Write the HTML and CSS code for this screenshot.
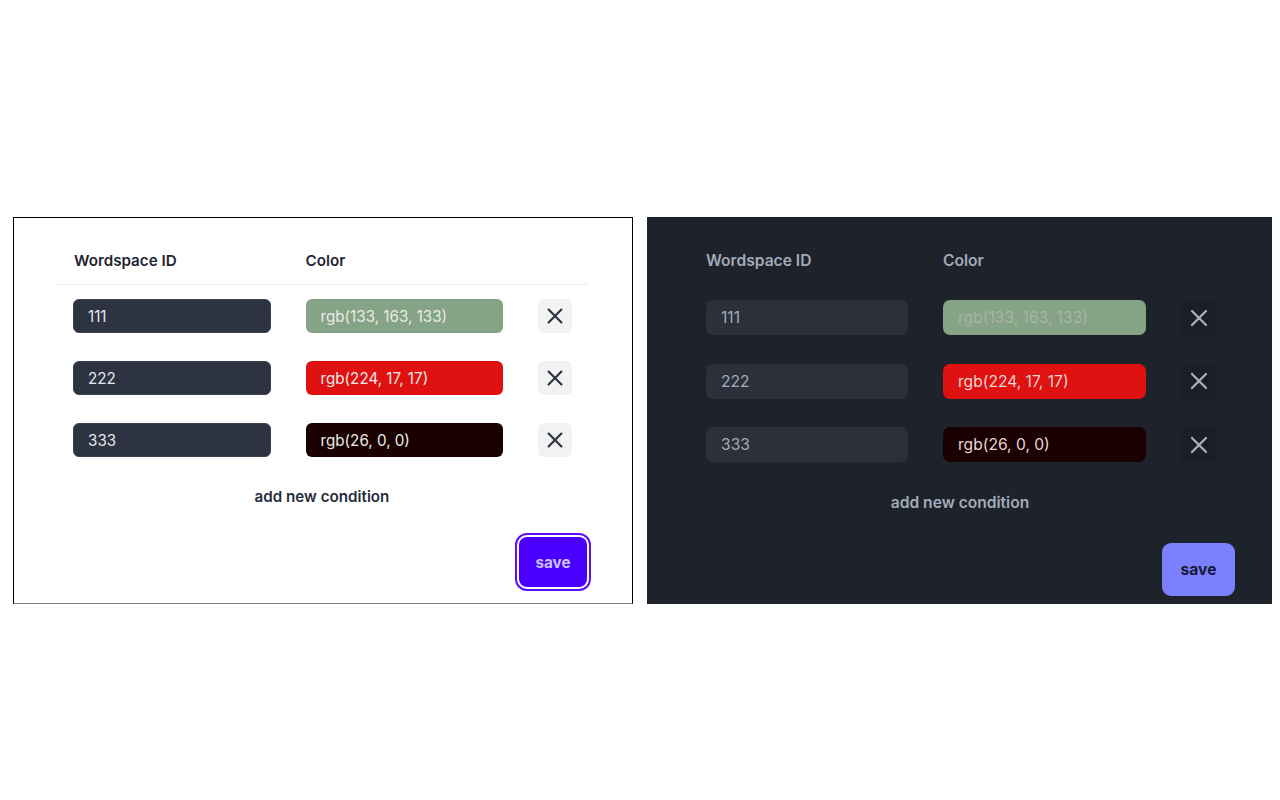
FILE: index.html
```html
<!DOCTYPE html>
<html lang="en">
<head>
<meta charset="utf-8">
<title>Workspace colors</title>
<link rel="stylesheet" href="styles.css">
</head>
<body>
<div class="stage">
  <section class="panel light">
    <div class="table">
      <div class="head">
        <div class="th">Wordspace ID</div>
        <div class="th">Color</div>
        <div class="th"></div>
      </div>
      <div class="rows">
        <div class="row">
          <div class="cell"><div class="field id">111</div></div>
          <div class="cell"><div class="field color" style="background: rgb(133, 163, 133)">rgb(133, 163, 133)</div></div>
          <div class="cell"><button class="remove"><svg viewBox="0 0 24 24"><path d="M5 5L19 19M19 5L5 19"/></svg></button></div>
        </div>
        <div class="row">
          <div class="cell"><div class="field id">222</div></div>
          <div class="cell"><div class="field color bright" style="background: rgb(224, 17, 17)">rgb(224, 17, 17)</div></div>
          <div class="cell"><button class="remove"><svg viewBox="0 0 24 24"><path d="M5 5L19 19M19 5L5 19"/></svg></button></div>
        </div>
        <div class="row">
          <div class="cell"><div class="field id">333</div></div>
          <div class="cell"><div class="field color bright" style="background: rgb(26, 0, 0)">rgb(26, 0, 0)</div></div>
          <div class="cell"><button class="remove"><svg viewBox="0 0 24 24"><path d="M5 5L19 19M19 5L5 19"/></svg></button></div>
        </div>
      </div>
      <div class="add">add new condition</div>
      <div class="actions"><button class="save">save</button></div>
    </div>
  </section>

  <section class="panel dark">
    <div class="table">
      <div class="head">
        <div class="th">Wordspace ID</div>
        <div class="th">Color</div>
        <div class="th"></div>
      </div>
      <div class="rows">
        <div class="row">
          <div class="cell"><div class="field id">111</div></div>
          <div class="cell"><div class="field color" style="background: rgb(133, 163, 133)">rgb(133, 163, 133)</div></div>
          <div class="cell"><button class="remove"><svg viewBox="0 0 24 24"><path d="M5 5L19 19M19 5L5 19"/></svg></button></div>
        </div>
        <div class="row">
          <div class="cell"><div class="field id">222</div></div>
          <div class="cell"><div class="field color bright" style="background: rgb(224, 17, 17)">rgb(224, 17, 17)</div></div>
          <div class="cell"><button class="remove"><svg viewBox="0 0 24 24"><path d="M5 5L19 19M19 5L5 19"/></svg></button></div>
        </div>
        <div class="row">
          <div class="cell"><div class="field id">333</div></div>
          <div class="cell"><div class="field color bright" style="background: rgb(26, 0, 0)">rgb(26, 0, 0)</div></div>
          <div class="cell"><button class="remove"><svg viewBox="0 0 24 24"><path d="M5 5L19 19M19 5L5 19"/></svg></button></div>
        </div>
      </div>
      <div class="add">add new condition</div>
      <div class="actions"><button class="save">save</button></div>
    </div>
  </section>
</div>
</body>
</html>
```

FILE: styles.css
```css
* { box-sizing: border-box; }

html, body {
  margin: 0;
  padding: 0;
  background: #ffffff;
}

body {
  font-family: Inter, "Liberation Sans", Arial, sans-serif;
  width: 1280px;
  height: 800px;
  overflow: hidden;
}

.stage {
  display: flex;
  align-items: flex-start;
  gap: 14px;
  padding: 217px 0 0 13px;
}

.panel {
  height: 387px;
}

.table {
  display: flex;
  flex-direction: column;
}

.head,
.row {
  display: grid;
}

.th {
  font-weight: 600;
  line-height: 20px;
}

.rows {
  display: flex;
  flex-direction: column;
}

.cell {
  display: flex;
  align-items: center;
}

.field {
  flex: 1;
  display: flex;
  align-items: center;
  padding-left: 15px;
  border-radius: 6px;
  white-space: nowrap;
}

.remove {
  display: flex;
  align-items: center;
  justify-content: center;
  padding: 0;
  border: 0;
  border-radius: 6px;
  cursor: pointer;
}

.remove svg {
  fill: none;
  stroke-width: 2.3;
  stroke-linecap: round;
}

.add {
  text-align: center;
  font-weight: 600;
  line-height: 20px;
  margin-top: 30px;
}

.actions {
  display: flex;
  justify-content: flex-end;
}

.save {
  font-family: inherit;
  font-weight: 700;
  border: 0;
  cursor: pointer;
}

/* ---------- light ---------- */
.light {
  width: 620px;
  border: 1px solid #000000;
  border-bottom-color: #7f7f7f;
  padding: 0 44px 0 42px;
  color: #1e2533;
}

.light .head,
.light .row {
  grid-template-columns: 232px 232px 69px;
}

.light .th {
  font-size: 15.2px;
  padding: 33px 17.5px 13px;
}

.light .th:first-child { padding-left: 18px; }

.light .head {
  border-bottom: 1px solid #efefef;
}

.light .rows {
  gap: 28px;
  margin-top: 14px;
}

.light .cell {
  padding: 0 17.5px;
  height: 34px;
}

.light .cell:first-child { padding-left: 17px; }

.light .field {
  height: 34px;
  font-size: 15.2px;
  color: #e4e8ee;
}

.light .field.id {
  background: #2d3340;
  border: 1px solid #3a4150;
  padding-left: 14px;
}

.light .field.color { color: #e9ece9; }

.light .remove {
  width: 34px;
  height: 34px;
  background: #f2f2f3;
}

.light .remove svg {
  width: 22px;
  height: 22px;
  stroke: #2a3140;
}

.light .add {
  font-size: 15.2px;
  color: #262d3a;
}

.light .actions {
  margin-top: 30px;
  padding-right: 1px;
}

.light .save {
  width: 68px;
  height: 50px;
  border-radius: 8px;
  background: #4b00ff;
  color: #c9c2ff;
  font-size: 15.2px;
  box-shadow: 0 0 0 2px #ffffff, 0 0 0 4px #5a0fff;
}

/* ---------- dark ---------- */
.dark {
  width: 625px;
  background: #1e232b;
  padding: 0 40px 0 41px;
  color: #a3abb8;
}

.dark .head,
.dark .row {
  grid-template-columns: 237.5px 238px 68.5px;
}

.dark .th {
  font-size: 15.6px;
  padding: 34px 17.5px 14px;
}

.dark .th:first-child { padding-left: 18px; }

.dark .head {
  border-bottom: 1px solid #1a1e25;
}

.dark .rows {
  gap: 28.5px;
  margin-top: 14px;
}

.dark .cell {
  padding: 0 17.5px;
  height: 35px;
}

.dark .cell:first-child { padding-left: 18px; }
.dark .cell:last-child { padding-right: 15px; }

.dark .field {
  height: 35px;
  font-size: 15.6px;
  border-radius: 7px;
  color: #a3abb8;
}

.dark .field.id {
  background: #2b303a;
}

.dark .field.color { color: #a9b3a9; }
.dark .field.color.bright { color: #e6d4d4; }

.dark .remove {
  width: 36px;
  height: 35px;
  background: #1a1e25;
}

.dark .remove svg {
  width: 24px;
  height: 24px;
  stroke: #a8b0bc;
}

.dark .add {
  font-size: 15.6px;
  color: #a3abb8;
  margin-top: 31px;
}

.dark .actions {
  margin-top: 30px;
  margin-right: -3px;
}

.dark .save {
  width: 73px;
  height: 53px;
  border-radius: 9px;
  background: #7b80ff;
  color: #16183a;
  font-size: 15.6px;
}
```
